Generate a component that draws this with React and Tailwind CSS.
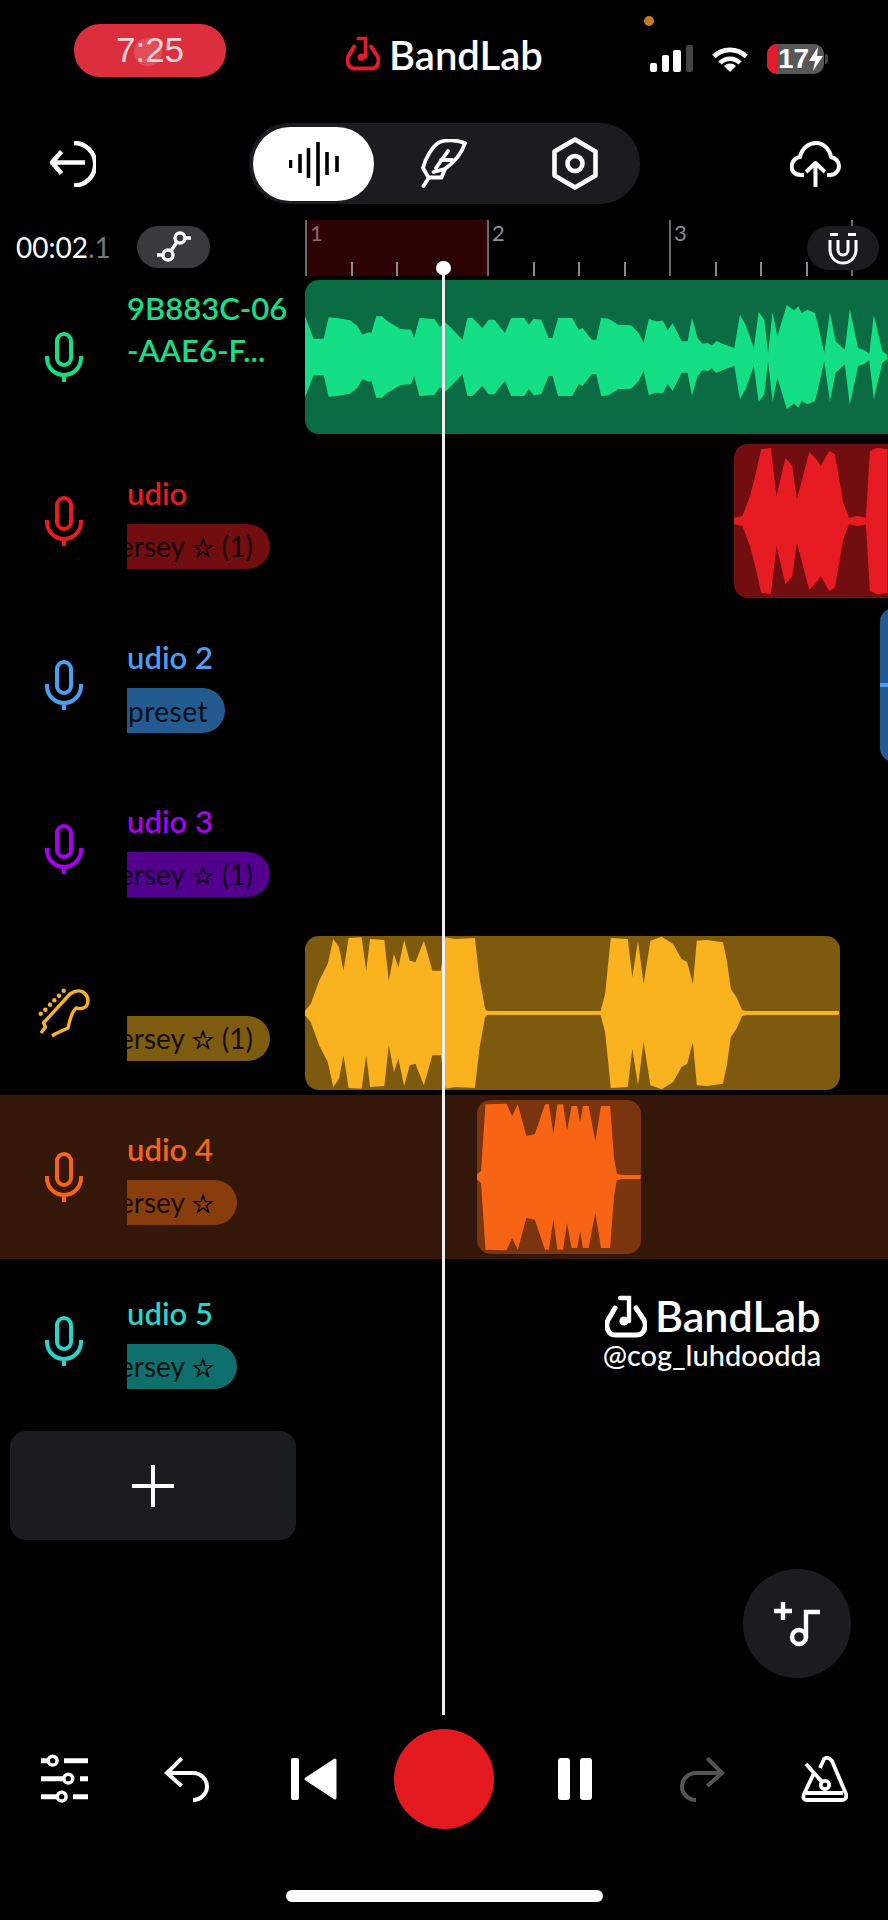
import React from 'react'

const greenEnv = [[15,140],[38,207],[65,207],[78,143],[100,145],[135,152],[155,170],[168,195],[185,188],[192,190],[205,140],[220,140],[235,155],[270,178],[298,180],[306,205],[320,145],[360,148],[375,172],[388,157],[405,175],[435,210],[448,145],[462,145],[488,175],[505,150],[520,150],[548,190],[565,145],[600,145],[612,165],[625,147],[645,150],[665,205],[675,205],[690,145],[728,145],[745,180],[755,175],[780,210],[792,210],[805,145],[825,147],[850,165],[885,167],[905,190],[918,220],[932,147],[950,155],[970,153],[982,182],[995,160],[1020,215],[1035,215],[1047,145],[1062,205],[1075,222],[1090,220],[1100,228],[1112,214],[1135,225],[1160,235],[1175,135],[1190,165],[1212,235],[1225,127],[1240,150],[1250,250],[1262,127],[1275,200],[1300,105],[1310,115],[1320,122],[1330,110],[1340,130],[1355,120],[1375,130],[1382,160],[1400,250],[1415,128],[1430,215],[1455,240],[1468,117],[1490,235],[1505,240],[1520,252],[1532,135],[1555,245],[1568,255]]
const redEnv = [[1297,745],[1312,740],[1325,680],[1333,630],[1345,540],[1362,535],[1372,680],[1388,565],[1400,590],[1408,690],[1430,548],[1445,575],[1450,590],[1465,545],[1475,555],[1490,700],[1500,745],[1515,740],[1530,745],[1537,545],[1550,535],[1568,540]]
const yellowEnv = [[540,1230],[550,1210],[565,1140],[580,1090],[590,1015],[600,1040],[608,1110],[617,1012],[640,1010],[648,1110],[655,1015],[680,1018],[688,1140],[697,1060],[705,1100],[715,1018],[725,1080],[735,1085],[750,1020],[765,1110],[780,1110],[788,1010],[805,1015],[840,1012],[848,1130],[858,1225],[862,1231],[1062,1231],[1070,1180],[1080,1012],[1110,1015],[1118,1130],[1128,1020],[1138,1150],[1150,1020],[1170,1008],[1190,1030],[1205,1075],[1215,1085],[1225,1150],[1232,1020],[1250,1018],[1278,1025],[1285,1080],[1292,1165],[1302,1190],[1312,1228],[1320,1231],[1483,1231]]
const orangeEnv = [[843,250],[850,240],[858,40],[895,38],[905,75],[915,40],[930,135],[945,130],[963,40],[970,40],[978,130],[985,40],[995,40],[1002,120],[1010,45],[1020,45],[1025,95],[1030,45],[1040,45],[1052,150],[1062,45],[1078,45],[1085,200],[1090,248],[1100,252],[1132,252]]

// envelope points are [x, y] read off the crops; mirror them round the clip's middle
function wavePath(env, sx, x0, cy) {
  const pts = env.map(([x, y]) => [(x - x0) / sx, (cy - y) / 3])
  const top = pts.map(([x, a]) => `${x.toFixed(1)} ${(77 - a).toFixed(1)}`)
  const bottom = [...pts].reverse().map(([x, a]) => `${x.toFixed(1)} ${(77 + a).toFixed(1)}`)
  return `M${top.join('L')}L${bottom.join('L')}Z`
}

function Wave({ d, fill }) {
  return (
    <svg className="absolute left-0 top-0" width="600" height="154" fill={fill}>
      <path d={d} />
    </svg>
  )
}

function Mic({ color }) {
  return (
    <svg width="38" height="50" viewBox="0 0 38 50" fill="none" stroke={color} strokeWidth="4">
      <rect x="12" y="2" width="14" height="31" rx="7" />
      <path d="M2 24v2a17 17 0 0 0 34 0v-2M19 43v7" />
    </svg>
  )
}

function Guitar({ color }) {
  return (
    <svg width="52" height="50" viewBox="0 0 52 50" fill="none" stroke={color} strokeWidth="3.4">
      <path d="M3 45L7.5 39L5.5 35L32 6Q39 1 45 4Q52 9 49 17Q46 22 38 20L35 24Q32 30 30 40L17 46L14 48" strokeLinejoin="round" />
      <g fill={color} stroke="none">
        <circle cx="2.7" cy="25.7" r="2.2" />
        <circle cx="7.3" cy="21.7" r="2.2" />
        <circle cx="12" cy="16.7" r="2.2" />
        <circle cx="16.3" cy="12.3" r="2.2" />
        <circle cx="21" cy="7.7" r="2.2" />
        <circle cx="25.7" cy="2.7" r="2.2" />
      </g>
    </svg>
  )
}

function Logo({ color, size }) {
  return (
    <svg width={size} height={size + 1} viewBox="0 0 42 43" fill="none" stroke={color} strokeWidth="5" strokeLinecap="round">
      <path d="M10 13L3 25C0 31 3 40 10 40H32C39 40 42 31 39 25L31 13" />
      <path d="M15 3H24V26" strokeWidth="4.4" />
      <circle cx="19" cy="26" r="4.6" fill={color} stroke="none" />
    </svg>
  )
}

const tracks = [
  { id: 'green', color: '#14df85', lines: ['9B883C-06', '-AAE6-F...'], clip: 'left-0 w-[584px] rounded-l-[14px] bg-[#0b6b42]', d: wavePath(greenEnv, 2.667, 15, 262) },
  { id: 'red', color: '#e71c22', lines: ['udio'], pill: 'ersey ☆ (1)', pillClass: 'w-[143px] bg-[#720d10]', clip: 'left-[429px] w-[160px] rounded-l-[14px] bg-[#720d10]', d: wavePath(redEnv, 1.766, 1297, 755) },
  { id: 'blue', color: '#4b9ff2', lines: ['udio 2'], pill: 'preset', pillClass: 'w-[98px] bg-[#235a8f]', clip: 'left-[575px] w-[20px] rounded-l-[14px] bg-[#235a8f]', line: true },
  { id: 'purple', color: '#a800f0', lines: ['udio 3'], pill: 'ersey ☆ (1)', pillClass: 'w-[143px] bg-[#54008f]' },
  { id: 'yellow', color: '#fab31e', guitar: true, pill: 'ersey ☆ (1)', pillClass: 'w-[143px] bg-[#7d5b0f]', clip: 'left-0 w-[535px] rounded-[14px] bg-[#7e5a0f]', d: wavePath(yellowEnv, 1.766, 540, 1237) },
  { id: 'orange', color: '#f76514', lines: ['udio 4'], pill: 'ersey ☆', pillClass: 'w-[110px] bg-[#8a3d0c]', clip: 'left-[172px] w-[164px] rounded-[14px] bg-[#7a340e]', d: wavePath(orangeEnv, 1.766, 843, 258), selected: true },
  { id: 'teal', color: '#2ad4cb', lines: ['udio 5'], pill: 'ersey ☆', pillClass: 'w-[110px] bg-[#0f6f6c]' },
]

const ticks = Array.from({ length: 13 }, (_, i) => i)

function PillText({ text }) {
  const [before, after] = text.split('☆')
  if (after === undefined) return <span className="ml-px tracking-[0.5px]">{text}</span>
  return (
    <span className="-ml-[8px]">
      {before}
      <span className="font-['DejaVu_Sans',sans-serif] text-[26px] [-webkit-text-stroke:0.7px_currentColor]">☆</span>
      {after}
    </span>
  )
}

function TrackRow({ track }) {
  const two = track.lines && track.lines.length === 2
  return (
    <div className={`flex h-[164px] ${track.selected ? 'bg-[#35170a]' : ''}`}>
      <div className="flex h-full w-[305px] shrink-0">
        <div className="flex w-[127px] shrink-0 items-center justify-center">
          {track.guitar ? <Guitar color={track.color} /> : <Mic color={track.color} />}
        </div>
        <div className={`w-[178px] overflow-hidden font-[Lato,sans-serif] ${two ? 'pt-[12px]' : 'pt-[34px]'}`}>
          {track.lines ? (
            <div className={`text-[31px] font-semibold whitespace-nowrap ${two ? 'leading-[42px]' : 'leading-[40px]'}`} style={{ color: track.color }}>
              {track.lines.map((l) => <div key={l}>{l}</div>)}
            </div>
          ) : <div className="h-[40px]" />}
          {track.pill && (
            <div className={`mt-[11px] flex h-[45px] items-center overflow-hidden whitespace-nowrap rounded-r-[23px] text-[28px] text-black/85 ${track.pillClass}`}>
              <PillText text={track.pill} />
            </div>
          )}
        </div>
      </div>
      <div className="relative flex-1">
        {track.clip && (
          <div className={`absolute top-[5px] h-[154px] overflow-hidden ${track.clip}`}>
            {track.d && <Wave d={track.d} fill={track.color} />}
            {track.line && <div className="mt-[75px] h-[4px] w-full" style={{ backgroundColor: track.color }} />}
          </div>
        )}
      </div>
    </div>
  )
}

export default function App() {
  return (
    <div className="relative flex h-[1920px] w-[888px] flex-col overflow-hidden bg-black font-[Lato,sans-serif] text-white">
      {/* status bar */}
      <div className="relative flex h-[123px] shrink-0 items-start">
        <div className="relative ml-[74px] mt-[24px] flex h-[53px] w-[152px] items-center justify-center overflow-hidden rounded-[26px] bg-[#dc2f3e] font-['Liberation_Sans',sans-serif] text-[35px] text-[#f9d5d9]">
          <span className="absolute left-[60px] top-[14px] h-[28px] w-[28px] rounded-full bg-white/15" />
          <span className="relative">7:25</span>
        </div>
        <div className="ml-[120px] mt-[36px]"><Logo color="#e31b2a" size={34} /></div>
        <div className="ml-[9px] mt-[32px] w-[153px] whitespace-nowrap text-[40px] font-semibold leading-[46px]">BandLab</div>
        <div className="ml-[108px] mt-[45px] flex h-[27px] w-[43px] items-end justify-between">
          <div className="h-[9px] w-[7px] rounded-[2px] bg-white" />
          <div className="h-[17px] w-[7px] rounded-[2px] bg-white" />
          <div className="h-[22px] w-[8px] rounded-[2px] bg-white" />
          <div className="h-[27px] w-[7px] rounded-[2px] bg-[#444446]" />
        </div>
        <svg className="ml-[19px] mt-[46px]" width="36" height="26" viewBox="0 0 36 26" fill="none" stroke="white">
          <path d="M1.8 10.5A23 23 0 0 1 34.2 10.5" strokeWidth="4.6" />
          <path d="M8 17A14 14 0 0 1 28 17" strokeWidth="4.4" />
          <path d="M18 26L12 20A8.5 8.5 0 0 1 24 20Z" fill="white" stroke="none" />
        </svg>
        <div className="relative ml-[19px] mt-[44px] flex h-[30px] w-[57px] items-center overflow-hidden rounded-[10px] bg-[#58585a]">
          <div className="h-full w-[10px] bg-[#e51b2c]" />
          <span className="ml-[1px] font-['Liberation_Sans',sans-serif] text-[28px] font-bold leading-none">17</span>
          <svg width="14" height="24" viewBox="0 0 14 24" fill="white"><path d="M9 0L0 14H6L4 24L14 9H8Z" /></svg>
        </div>
        <div className="absolute left-[825px] top-[54px] h-[10px] w-[3px] rounded-r-full bg-[#444446]" />
        <div className="absolute left-[644px] top-[16px] h-[10px] w-[10px] rounded-full bg-[#c87a1e]" />
      </div>

      {/* toolbar */}
      <div className="flex h-[81px] shrink-0 items-center">
        <svg className="ml-[50px]" width="46" height="46" viewBox="0 0 46 46" fill="none" stroke="white" strokeWidth="4.6">
          <path d="M11.5 10.5L2 21.5L11.5 32.5M2 21.5H35" strokeLinejoin="round" />
          <path d="M24 2A21 21 0 0 1 24 44.5" />
        </svg>
        <div className="ml-[153px] flex h-[81px] w-[391px] items-center rounded-[40px] bg-[#1b1c20] pl-[4px]">
          <div className="flex h-[74px] w-[121px] items-center justify-center rounded-[37px] bg-white">
            <svg width="50" height="46" viewBox="0 0 50 46" stroke="black" strokeWidth="3.6">
              <path d="M1.500 19v8M11 13v19M19.500 7v30M29 1v44M38 11v23M48 15v16" />
            </svg>
          </div>
          <svg className="ml-[47px]" width="46" height="49" viewBox="0 0 46 49" fill="none" stroke="white" strokeWidth="3.8" strokeLinejoin="round">
            <path d="M44 4C36 1 24 0 17 4C11 8 4 20 2 29L7.500 38.500H20.500L24 30C32 24 41 14 44 4Z" />
            <path d="M2.500 47L8 38.500M15 29L27 12M20 21H31M12.500 33L24 30" strokeLinecap="round" />
          </svg>
          <svg className="ml-[85px]" width="46" height="53" viewBox="0 0 46 53" fill="none" stroke="white" strokeWidth="4.6">
            <path d="M23 2.500L43.500 14.500V38.500L23 50.500L2.500 38.500V14.500Z" strokeLinejoin="round" />
            <circle cx="23" cy="26.500" r="7.500" />
          </svg>
        </div>
        <svg className="ml-[150px]" width="51" height="46" viewBox="0 0 51 46" fill="none" stroke="white" strokeWidth="4" strokeLinejoin="round">
          <path d="M14 34H11C4 34 1 29 1.800 24C2.500 19 7 16 10 16C12 7 19 2 26 2C34 2 40 9 41 16C46 17 49 21 49 25C49 30 45 34 40 34H37" />
          <path d="M25.500 46V22M16 31L25.500 22L35 31" />
        </svg>
      </div>

      {/* ruler */}
      <div className="relative mt-[16px] flex h-[56px] shrink-0">
        <div className="flex w-[305px] shrink-0 items-center pb-[2px]">
          <div className="ml-[16px] w-[121px] text-[28px] leading-none">00:02<span className="text-[#77777b]">.1</span></div>
          <div className="flex h-[42px] w-[73px] items-center justify-center rounded-full bg-[#3a3a3c]">
            <svg width="36" height="32" viewBox="0 0 36 32" fill="none" stroke="white" strokeWidth="3.400">
              <circle cx="24" cy="7" r="5" />
              <circle cx="12" cy="24" r="5" />
              <path d="M21 11L15 20M29 7H35M7 24H1" />
            </svg>
          </div>
        </div>
        <div className="relative flex-1">
          <div className="absolute left-0 top-0 h-full w-[182px] bg-[#2c0205]" />
          {ticks.map((i) => (
            <div
              key={i}
              className={`absolute bottom-0 w-[2px] ${i % 4 === 0 ? 'top-0 bg-[#6b6b6f]' : 'h-[14px] bg-[#8a8a8e]'}`}
              style={{ left: i * 45.5 }}
            />
          ))}
          <span className="absolute left-[5px] top-[1px] text-[22px] leading-[24px] text-[#8b6a6d]">1</span>
          <span className="absolute left-[187px] top-[1px] text-[22px] leading-[24px] text-[#8d8d92]">2</span>
          <span className="absolute left-[369px] top-[1px] text-[22px] leading-[24px] text-[#8d8d92]">3</span>
        </div>
        <div className="absolute right-[9px] top-[6px] flex h-[44px] w-[72px] items-center justify-center rounded-full bg-[#1b1c20]">
          <svg width="30" height="33" viewBox="0 0 30 33" fill="none" stroke="white" strokeWidth="3">
            <path d="M2 8V18A13 13 0 0 0 28 18V8M10 8V18A5 5 0 0 0 20 18V8M2 2.500H10M20 2.500H28" />
          </svg>
        </div>
      </div>

      {/* tracks */}
      <div className="-mt-px shrink-0">
        {tracks.map((t) => <TrackRow key={t.id} track={t} />)}
      </div>

      <div className="ml-[10px] mt-[8px] flex h-[109px] w-[286px] shrink-0 items-center justify-center rounded-[16px] bg-[#1b1c20]">
        <svg width="42" height="42" viewBox="0 0 42 42" stroke="white" strokeWidth="4">
          <path d="M21 0V42M0 21H42" />
        </svg>
      </div>

      <div className="relative ml-[743px] mt-[29px] h-[109px] w-[108px] shrink-0 rounded-full bg-[#1b1c20]">
        <svg className="absolute left-0 top-0" width="108" height="109" viewBox="0 0 108 109" fill="none" stroke="white" strokeWidth="4.400">
          <path d="M40 33V51M31 42H49" />
          <path d="M63 69V43H77" />
          <circle cx="56" cy="68" r="7" />
        </svg>
      </div>

      {/* transport */}
      <div className="mt-[51px] flex h-[100px] shrink-0 items-center">
        <svg className="ml-[41px]" width="47" height="50" viewBox="0 0 47 50" fill="none" stroke="white" strokeWidth="5">
          <path d="M0 6.700H7M23 6.700H47M0 24.700H22M39 24.700H47M0 42.700H16M32 42.700H47" />
          <g strokeWidth="3.500" fill="black">
            <circle cx="11.700" cy="6.700" r="4.400" />
            <circle cx="27.300" cy="24.700" r="4.400" />
            <circle cx="20.700" cy="42.700" r="4.400" />
          </g>
        </svg>
        <svg className="ml-[76px]" width="48" height="45" viewBox="0 0 48 45" fill="none" stroke="white" strokeWidth="4">
          <path d="M17.700 1.300L3 16L17.700 29M3 16H29A14 13.500 0 0 1 29 43" />
        </svg>
        <svg className="ml-[78px]" width="47" height="42" viewBox="0 0 47 42" fill="white" stroke="white" strokeLinejoin="round">
          <rect x="1" y="0" width="8" height="42" rx="2" stroke="none" />
          <path d="M45 2V40L16 21Z" strokeWidth="3" />
        </svg>
        <div className="ml-[57px] h-[100px] w-[100px] rounded-full bg-[#e31b20]" />
        <div className="ml-[64px] flex h-[42px] w-[34px] justify-between">
          <div className="h-full w-[12px] rounded-[3px] bg-white" />
          <div className="h-full w-[12px] rounded-[3px] bg-white" />
        </div>
        <svg className="ml-[85px]" width="48" height="45" viewBox="0 0 48 45" fill="none" stroke="#555557" strokeWidth="4">
          <path d="M30.300 1.300L45 16L30.300 29M45 16H19A14 13.500 0 0 0 19 43" />
        </svg>
        <svg className="ml-[76px]" width="47" height="46" viewBox="0 0 47 46" fill="none" stroke="white" strokeWidth="3.800" strokeLinejoin="round">
          <path d="M13 17L3 38Q1 44 6 44H41Q46 44 45 38L31 5Q27 0 23 3L19 12" />
          <path d="M5 37H42M5 8L22 27" />
          <circle cx="24" cy="29" r="4.200" />
        </svg>
      </div>

      <div className="ml-[286px] mt-[61px] h-[12px] w-[317px] shrink-0 rounded-full bg-white" />

      {/* watermark */}
      <div className="absolute left-[592px] top-[1294px] w-[240px]">
        <div className="flex items-center pl-[13px]">
          <Logo color="white" size={42} />
          <span className="ml-[8px] text-[43px] font-semibold leading-[44px]">BandLab</span>
        </div>
        <div className="mt-[1px] whitespace-nowrap text-center text-[29px] font-medium leading-[32px]">@cog_luhdoodda</div>
      </div>

      {/* playhead */}
      <div className="absolute left-[442px] top-[268px] h-[1447px] w-[3px] bg-[#f0f0f0]" />
      <div className="absolute left-[436px] top-[261px] h-[14px] w-[15px] rounded-full bg-white" />
    </div>
  )
}
